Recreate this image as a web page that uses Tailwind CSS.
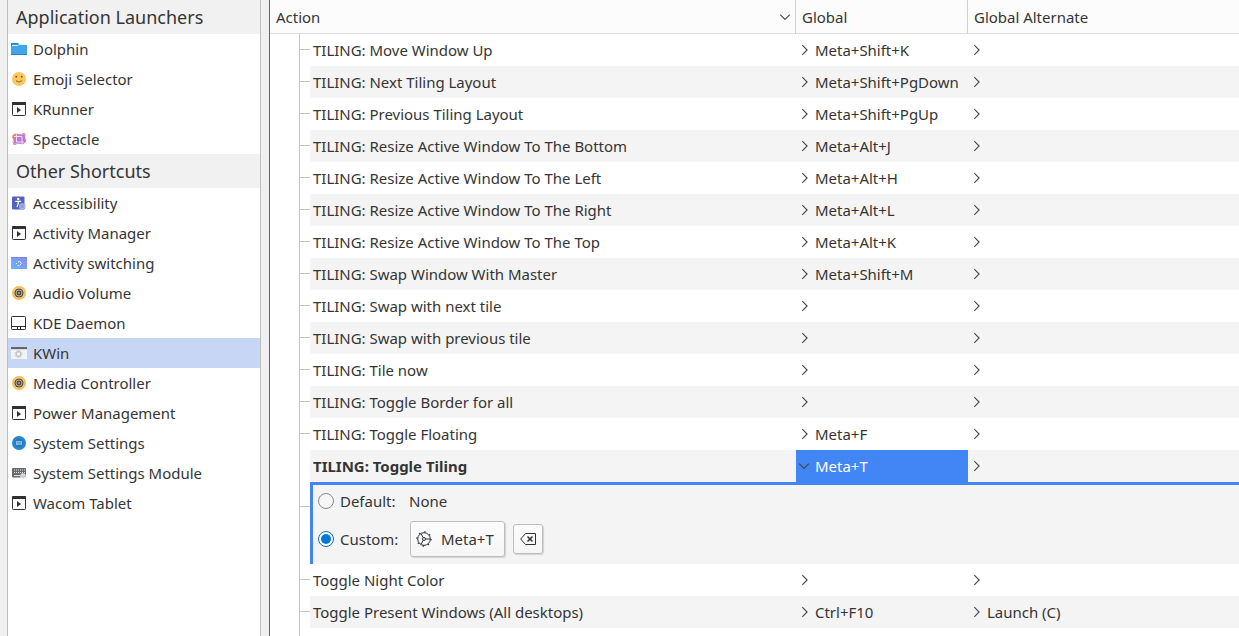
<!DOCTYPE html>
<html lang="en">
<head>
<meta charset="utf-8">
<title>Shortcuts</title>
<script src="https://cdn.jsdelivr.net/npm/@tailwindcss/browser@4"></script>
</head>
<body class="flex h-screen overflow-hidden bg-[#f0f0f0] font-['Noto_Sans',sans-serif] text-[14.97px] text-[#353535]">
<svg class="absolute size-0">
  <linearGradient id="sg" x1="0" y1="1" x2="1" y2="0"><stop stop-color="#65b8fb"/><stop offset="1" stop-color="#8b87f5"/></linearGradient>
  <linearGradient id="pg" x1="0" y1="0" x2="1" y2="1"><stop stop-color="#d977c6"/><stop offset="1" stop-color="#a877d6"/></linearGradient>
  <symbol id="folder" viewBox="0 0 16 16"><path d="M0 2h7l1 1h7v11H0z" fill="#258fdd"/><path d="M1 4h6l1-1h7v1H8L7 5H1z" fill="#d8effc"/><path d="M0 5h7l1-1h8v9.500H0z" fill="#43a4ec"/><path d="M0 13.500h16" stroke="#2588d4"/></symbol>
  <symbol id="emoji" viewBox="0 0 16 16"><circle cx="8" cy="8" r="7" fill="#fdc75f"/><circle cx="5.300" cy="5.700" r=".9" fill="#6b4a32"/><circle cx="10.700" cy="5.700" r=".9" fill="#6b4a32"/><path d="M5 9.700Q8 12.500 11 9.700" fill="none" stroke="#7e5634" stroke-width=".9"/></symbol>
  <symbol id="run" viewBox="0 0 16 16"><rect x="1.500" y="1.500" width="13" height="13" rx=".8" fill="#fcfcfc" stroke="#2e3236"/><path d="M1.500 1h13l.5.5V4H1V1.500z" fill="#2e3236"/><path d="M6 6v6l4-3z" fill="#2e3236"/></symbol>
  <symbol id="spectacle" viewBox="0 0 16 16"><path d="M3 2.500h4L4 6 1 8V5zM12 13.500l3-3V8l-4 5z" fill="#f7b56f"/><path d="M11 2h3l1 4-3-2zM1 10l1.500 4H6z" fill="#f09a8b"/><path d="M1.500 4.500l3-1.500 9 .5 1.500 7-3 2.500-9-.5z" fill="url(#pg)"/><path d="M5.500 3.500V11H13M3 5.500h8V13" fill="none" stroke="#f1dcf5"/></symbol>
  <symbol id="access" viewBox="0 0 16 16"><rect x="1" y="1.500" width="12.500" height="13" rx="1" fill="#5263bd"/><circle cx="7.200" cy="4" r="1.200" fill="#fff"/><path d="M4.300 6.300h5.900M7.200 6v3.500M7 9L6 12" fill="none" stroke="#fff" stroke-width="1.200"/><circle cx="11.300" cy="11.500" r="3.200" fill="#aab3e3"/><path d="M9.300 9.500l4 4M13.300 9.500l-4 4" stroke="#7783cc" stroke-width=".8"/></symbol>
  <symbol id="switching" viewBox="0 0 16 16"><path d="M0 2h16v12H0z" fill="url(#sg)"/><path d="M0 2h16v1H0z" fill="#6d8be6"/><path d="M8.500 6L10.500 8.500l-2 2" fill="none" stroke="#fff"/><path d="M5 8h1v1H5zM7 6.300h1v1H7zM6.700 10h1v1H6.700z" fill="#fff"/></symbol>
  <symbol id="audio" viewBox="0 0 16 16"><circle cx="8" cy="8" r="7" fill="#fdbc4b"/><circle cx="8" cy="8" r="5.200" fill="#f6dcae"/><circle cx="8" cy="8" r="4.600" fill="#4d4d4d"/><circle cx="8" cy="8" r="3" fill="none" stroke="#d6bc8c" stroke-width=".9"/><circle cx="8" cy="8" r=".9" fill="#c8aa78"/></symbol>
  <symbol id="daemon" viewBox="0 0 16 16"><rect x=".5" y="1.500" width="14" height="13" rx=".8" fill="none" stroke="#2e3236"/><path d="M1 11.500h14M6.500 11.500v3M9.500 11.500v3" stroke="#2e3236"/></symbol>
  <symbol id="kwin" viewBox="0 0 16 16"><path d="M0 2h16v12H0z" fill="#f2f3f4"/><path d="M0 2h16v2.200H0z" fill="#616970"/><circle cx="7.500" cy="9" r="2.400" fill="none" stroke="#bfc1c3" stroke-width="1.200"/><circle cx="7.500" cy="9" r="3.500" fill="none" stroke="#bfc1c3" stroke-width="1" stroke-dasharray="1.375 1.375"/></symbol>
  <symbol id="settings" viewBox="0 0 16 16"><circle cx="8" cy="8" r="7" fill="#1d87d8"/><circle cx="8" cy="8" r="4.200" fill="#3973a5"/><path d="M5 6h6v4H5z" fill="#80bdeb"/><path d="M6 7.300h4M7 9h3" stroke="#4a8fc6" stroke-width=".7"/></symbol>
  <symbol id="keyboard" viewBox="0 0 16 16"><rect x="1" y="3" width="14" height="9.500" rx="1" fill="#666a6d"/><path d="M3 5h11M3 7.500h11" stroke="#e5e6e7" stroke-dasharray="1 1"/><path d="M3 10.500h6" stroke="#d9dbdc"/><circle cx="12" cy="11" r="2.800" fill="#e5e6e7"/><circle cx="12" cy="11" r="1.400" fill="none" stroke="#c4c6c8"/></symbol>
  <symbol id="right" viewBox="0 0 16 16"><path d="M6.300 3.200L11.100 8l-4.800 4.800" fill="none" stroke="#45484b" stroke-width="1.100"/></symbol>
  <symbol id="down" viewBox="0 0 16 16"><path d="M3.200 5.700L8 10.500l4.800-4.800" fill="none" stroke="#45484b" stroke-width="1.100"/></symbol>
</svg>

<aside class="ml-[7px] w-[254px] shrink-0 border-x border-[#bcbec0] bg-white" id="side"></aside>
<main class="ml-2 flex min-w-0 flex-1 flex-col border-l border-[#1a78c2] bg-white">
  <header class="flex h-[34px] shrink-0 items-center border-b border-[#dfdfdf] bg-[#fcfcfc]">
    <div class="flex w-[526px] items-center justify-between border-r border-[#d0d1d2] pr-[2px] pl-1.5 leading-[33px]"><span class="pt-px">Action</span><svg class="size-4"><use href="#down"/></svg></div>
    <div class="w-[172px] border-r border-[#d0d1d2] pt-px pl-1.5 leading-8">Global</div>
    <div class="pt-px pl-1.5 leading-8">Global Alternate</div>
  </header>
  <div class="ml-[29px] flex flex-1 flex-col border-l border-[#c3c4c5]" id="rows"></div>
</main>

<template id="editor">
  <div class="flex h-[82px] shrink-0">
    <div class="mt-6 h-px w-2.5 bg-[#c3c4c5]"></div>
    <div class="flex-1 border-t-[3px] border-l-[3px] border-[#4285f4] bg-[#f4f4f4] pl-[5px]">
      <div class="flex h-8 items-center">
        <span class="size-4 rounded-full border border-[#85888b] bg-[#f7f7f7]"></span>
        <span class="ml-1.5 w-[69px] pt-px">Default:</span><span class="pt-px">None</span>
      </div>
      <div class="mt-px flex h-[42px] items-center">
        <span class="flex size-4 items-center justify-center rounded-full border border-[#0a70bd] bg-white"><span class="size-2.5 rounded-full bg-[#0078d4]"></span></span>
        <span class="ml-1.5 w-[70px] pt-px">Custom:</span>
        <button class="flex h-9 w-[95px] items-center rounded-[3px] border border-[#bcbec0] bg-linear-to-b from-[#fcfcfc] to-[#f6f6f6] pl-[5px] shadow-[1px_1px_1px_#00000025]">
          <svg class="size-4" viewBox="0 0 16 16" fill="none" stroke="#2e3236"><circle cx="8" cy="8" r="6.300"/><circle cx="8" cy="8" r="7.100" stroke-width="1.200" stroke-dasharray="1.500 4.076"/><circle cx="8" cy="8" r="1.500"/><path d="M9.500 8H14M7.200 6.700L5 2.700M7.200 9.300L5 13.300"/></svg>
          <span class="ml-[9px] pt-px">Meta+T</span>
        </button>
        <button class="ml-2 flex size-[30px] items-center justify-center rounded-[3px] border border-[#bcbec0] bg-linear-to-b from-[#fcfcfc] to-[#f6f6f6] shadow-[1px_1px_1px_#00000025]">
          <svg class="size-4" viewBox="0 0 16 16" fill="none" stroke="#2e3236"><path d="M5.500 2.500h10v11h-10L.7 8z"/><path d="M7.500 5.500l5 5M12.500 5.500l-5 5" stroke-width="1.500"/></svg>
        </button>
      </div>
    </div>
  </div>
</template>

<script>
const groups = [
  ['Application Launchers', [['folder','Dolphin'],['emoji','Emoji Selector'],['run','KRunner'],['spectacle','Spectacle']]],
  ['Other Shortcuts', [['access','Accessibility'],['run','Activity Manager'],['switching','Activity switching'],['audio','Audio Volume'],['daemon','KDE Daemon'],['kwin','KWin'],['audio','Media Controller'],['run','Power Management'],['settings','System Settings'],['keyboard','System Settings Module'],['run','Wacom Tablet']]]
];
document.getElementById('side').innerHTML = groups.map(([title, items]) =>
  `<h2 class="h-[34px] bg-[#f1f1f1] pl-2 text-[18px] leading-[34px]">${title}</h2>` +
  items.map(([icon, name]) => `<div class="flex h-[30px] items-center pl-[3px] ${name === 'KWin' ? 'bg-[#c7d6f5]' : ''}"><svg class="size-4 shrink-0"><use href="#${icon}"/></svg><span class="ml-1.5 pt-px">${name}</span></div>`).join('')
).join('');

const rows = [
  ['TILING: Move Window Up','Meta+Shift+K'],['TILING: Next Tiling Layout','Meta+Shift+PgDown'],['TILING: Previous Tiling Layout','Meta+Shift+PgUp'],
  ['TILING: Resize Active Window To The Bottom','Meta+Alt+J'],['TILING: Resize Active Window To The Left','Meta+Alt+H'],
  ['TILING: Resize Active Window To The Right','Meta+Alt+L'],['TILING: Resize Active Window To The Top','Meta+Alt+K'],
  ['TILING: Swap Window With Master','Meta+Shift+M'],['TILING: Swap with next tile',''],['TILING: Swap with previous tile',''],
  ['TILING: Tile now',''],['TILING: Toggle Border for all',''],['TILING: Toggle Floating','Meta+F'],['TILING: Toggle Tiling','Meta+T'],
  ['Toggle Night Color',''],['Toggle Present Windows (All desktops)','Ctrl+F10','Launch (C)']
];
document.getElementById('rows').innerHTML = rows.map(([name, key, alt = ''], i) => {
  const open = name === 'TILING: Toggle Tiling';
  return `<div class="flex h-8 shrink-0 leading-8">
    <div class="mt-[15px] h-px w-2.5 ${open ? '' : 'bg-[#c3c4c5]'}"></div>
    <div class="flex flex-1 ${i % 2 ? 'bg-[#f4f4f4]' : ''}">
      <div class="w-[486px] pl-[3px] ${open ? 'font-bold' : ''}">${name}</div>
      <div class="flex w-[172px] items-center ${open ? 'bg-[#4285f4] text-white' : ''}"><svg class="size-4"><use href="${open ? '#down' : '#right'}"/></svg><span class="ml-[3px]">${key}</span></div>
      <div class="flex items-center"><svg class="size-4"><use href="#right"/></svg><span class="ml-[3px]">${alt}</span></div>
    </div></div>` + (open ? document.getElementById('editor').innerHTML : '');
}).join('');
</script>
</body>
</html>
